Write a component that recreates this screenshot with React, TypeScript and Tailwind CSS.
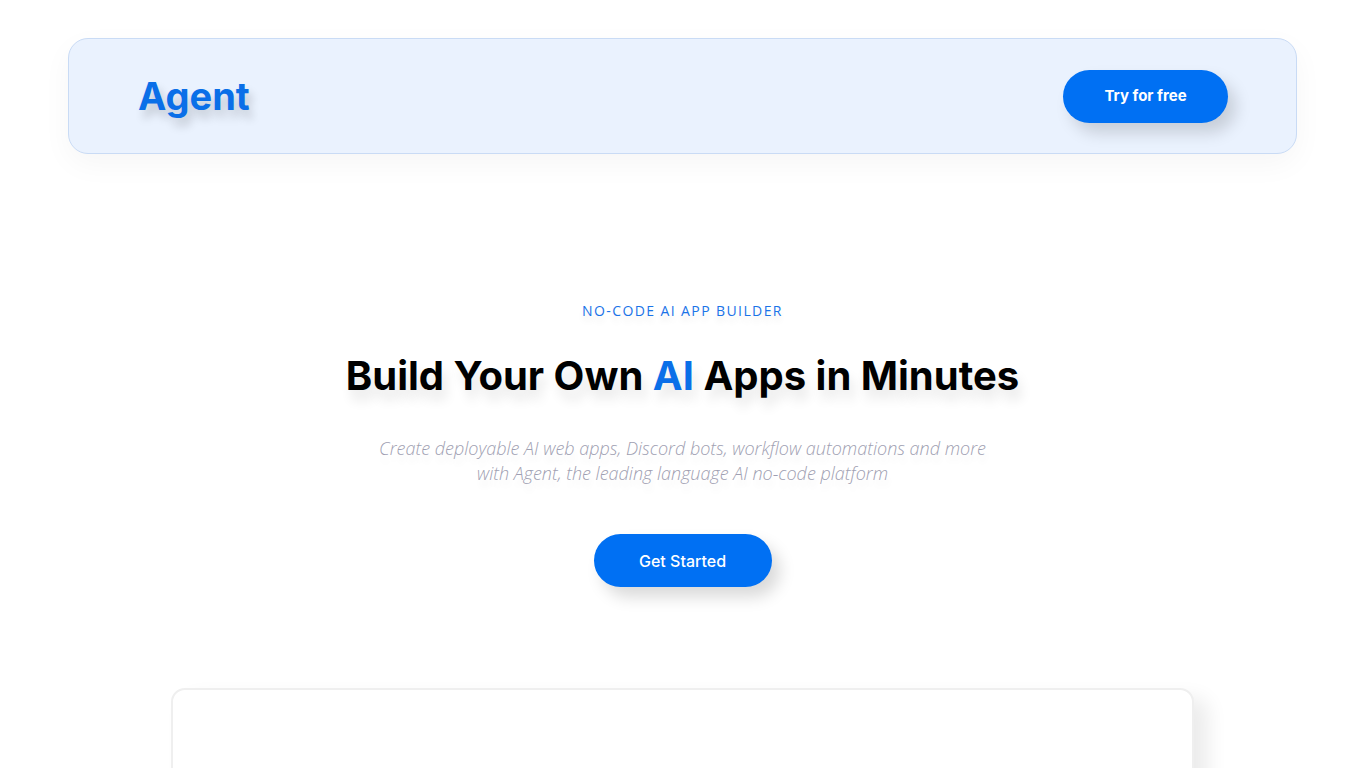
export default function App() {
  return (
    <div className="min-h-screen bg-white font-['Inter',sans-serif] overflow-hidden">
      {/* Header */}
      <div className="px-[68px] pt-[38px]">
        <header className="h-[116px] flex items-center justify-between rounded-[20px] border border-[#c9dbf5] bg-[#eaf2fe] pl-[69px] pr-[68px] shadow-[0_10px_30px_rgba(0,0,0,0.04)]">
          <div className="text-[38px] font-bold text-[#0a6fe8] [text-shadow:4px_8px_10px_rgba(0,0,0,0.18)]">
            Agent
          </div>
          <button className="w-[165px] h-[53px] rounded-full bg-[#0070f3] text-white text-[15px] font-bold shadow-[8px_10px_16px_rgba(0,0,0,0.15)]">
            Try for free
          </button>
        </header>
      </div>

      {/* Hero */}
      <section className="flex flex-col items-center pt-[146px]">
        <p className="font-['Open_Sans',sans-serif] text-[14px] tracking-[0.1em] text-[#1a73e8] [text-shadow:0_6px_6px_rgba(0,0,0,0.08)]">
          NO-CODE AI APP BUILDER
        </p>
        <h1 className="mt-[25px] text-[40px] font-bold text-black [text-shadow:4px_10px_12px_rgba(0,0,0,0.1)]">
          Build Your Own <span className="text-[#0a6fe8]">AI</span> Apps in Minutes
        </h1>
        <p className="mt-[30px] text-center font-['Open_Sans',sans-serif] font-light italic text-[18px] leading-[25px] text-[#9f9fb2] [text-shadow:2px_8px_6px_rgba(0,0,0,0.06)]">
          Create deployable AI web apps, Discord bots, workflow automations and more
          <br />
          with Agent, the leading language AI no-code platform
        </p>
        <button className="mt-[48px] w-[178px] h-[53px] rounded-full bg-[#0070f3] text-white text-[16px] font-medium shadow-[8px_10px_16px_rgba(0,0,0,0.15)]">
          Get Started
        </button>
      </section>

      {/* Preview card */}
      <div className="mt-[101px] flex justify-center">
        <div className="w-[1023px] h-[200px] rounded-[14px] border-2 border-[#efefef] bg-white shadow-[14px_10px_20px_rgba(0,0,0,0.08)]" />
      </div>
    </div>
  );
}
